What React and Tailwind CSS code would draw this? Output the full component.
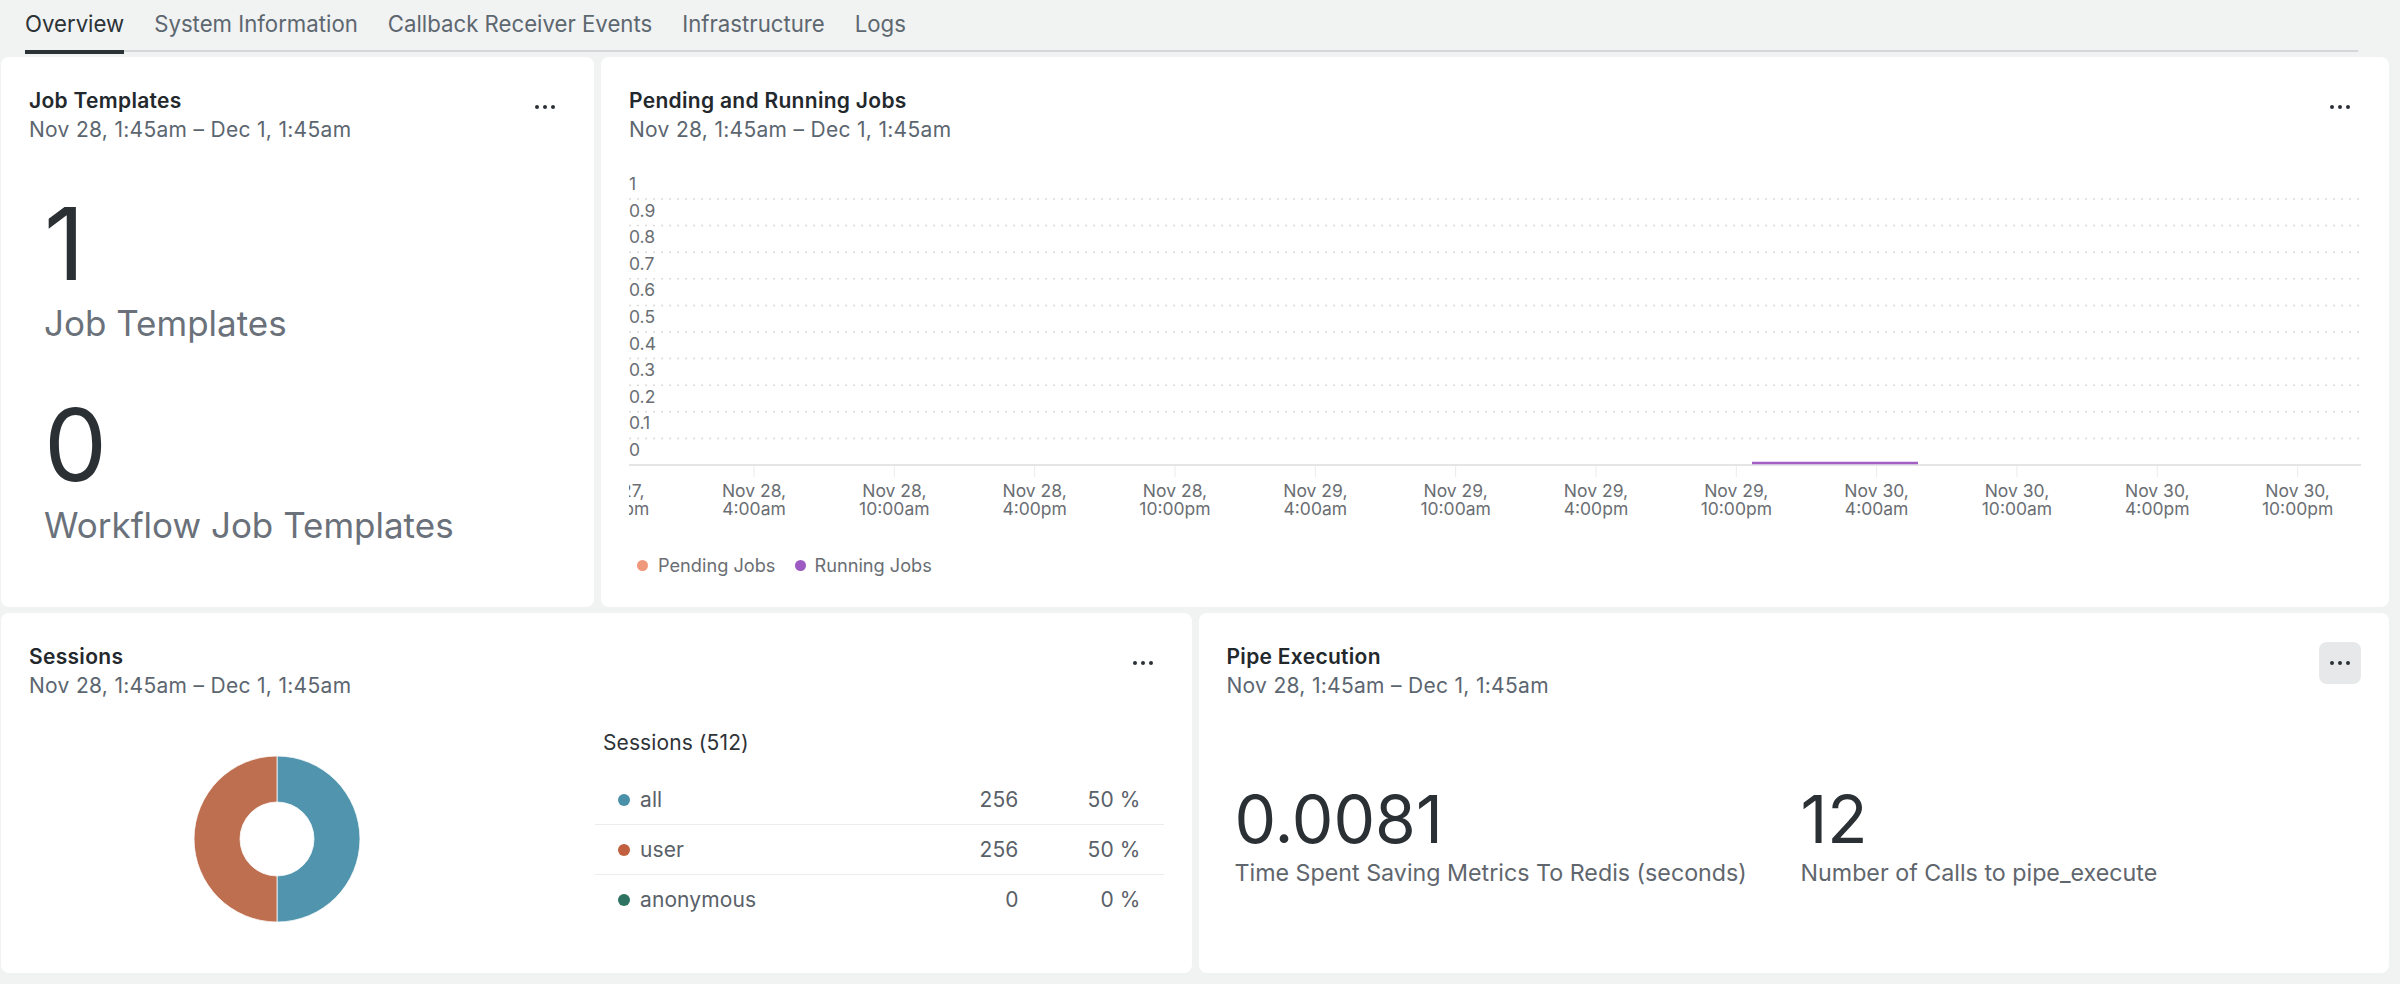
import React from 'react';

const RANGE = 'Nov 28, 1:45am – Dec 1, 1:45am';

const tabs = ['Overview', 'System Information', 'Callback Receiver Events', 'Infrastructure', 'Logs'];

const xTicks = [
  ['Nov 27,', '10:00pm'],
  ['Nov 28,', '4:00am'],
  ['Nov 28,', '10:00am'],
  ['Nov 28,', '4:00pm'],
  ['Nov 28,', '10:00pm'],
  ['Nov 29,', '4:00am'],
  ['Nov 29,', '10:00am'],
  ['Nov 29,', '4:00pm'],
  ['Nov 29,', '10:00pm'],
  ['Nov 30,', '4:00am'],
  ['Nov 30,', '10:00am'],
  ['Nov 30,', '4:00pm'],
  ['Nov 30,', '10:00pm'],
];

const yLabels = ['1', '0.9', '0.8', '0.7', '0.6', '0.5', '0.4', '0.3', '0.2', '0.1', '0'];

const sessions = [
  { name: 'all', count: 256, pct: '50 %', color: '#4a90a9' },
  { name: 'user', count: 256, pct: '50 %', color: '#c0603f' },
  { name: 'anonymous', count: 0, pct: '0 %', color: '#2f7463' },
];

const Dots = ({ hover }) => (
  <button
    className={`w-[42px] h-[42px] rounded-lg flex items-center justify-center gap-[4px] shrink-0 ${
      hover ? 'bg-[#e7e8e9]' : ''
    }`}
  >
    <span className="w-[4px] h-[4px] rounded-full bg-[#2b3136]" />
    <span className="w-[4px] h-[4px] rounded-full bg-[#2b3136]" />
    <span className="w-[4px] h-[4px] rounded-full bg-[#2b3136]" />
  </button>
);

const CardHeader = ({ title, hover }) => (
  <div className="flex items-start justify-between pl-[28px] pr-[28px] pt-[29px]">
    <div className="tracking-[0.3px]">
      <div className="text-[21px] leading-[29px] font-semibold text-[#23282d]">{title}</div>
      <div className="text-[21px] leading-[29px] text-[#5c6670]">{RANGE}</div>
    </div>
    <Dots hover={hover} />
  </div>
);

const JobsChart = () => {
  const lineY = i => 29 + 26.6 * i; // relative to svg top (y=170)
  const tickX = i => 125 + 140.33 * i;
  return (
    <svg width="1732" height="350" className="block">
      {yLabels.map((l, i) => (
        <text
          key={l}
          x="0"
          y={lineY(i) - 15.5}
          dominantBaseline="central"
          fontSize="17.5"
          fill="#6a6e73"
          fontFamily="Inter, sans-serif"
        >
          {l}
        </text>
      ))}
      {yLabels.slice(0, 10).map((l, i) => (
        <line
          key={'g' + l}
          x1="0"
          x2="1732"
          y1={lineY(i)}
          y2={lineY(i)}
          stroke="#d9dadb"
          strokeWidth="1.5"
          strokeDasharray="2 6"
        />
      ))}
      <line x1="0" x2="1732" y1="295" y2="295" stroke="#e4e5e6" strokeWidth="2" />
      {xTicks.map((t, j) => {
        const x = tickX(j - 1);
        return (
          <g key={j}>
            <line x1={x} x2={x} y1="296" y2="307" stroke="#ebebeb" strokeWidth="1" />
            <text
              x={x}
              y="320"
              textAnchor="middle"
              dominantBaseline="central"
              fontSize="17.5"
              fill="#6a6e73"
              fontFamily="Inter, sans-serif"
            >
              {t[0]}
            </text>
            <text
              x={x}
              y="338"
              textAnchor="middle"
              dominantBaseline="central"
              fontSize="17.5"
              fill="#6a6e73"
              fontFamily="Inter, sans-serif"
            >
              {t[1]}
            </text>
          </g>
        );
      })}
      <line x1="1123" x2="1289" y1="293" y2="293" stroke="#a35fc4" strokeWidth="2.5" />
    </svg>
  );
};

const Donut = () => {
  const R = 83;
  const r = 37;
  // right half (all) and left half (user)
  const right = `M 83 0 A ${R} ${R} 0 0 1 83 166 L 83 ${83 + r} A ${r} ${r} 0 0 0 83 ${83 - r} Z`;
  const left = `M 83 166 A ${R} ${R} 0 0 1 83 0 L 83 ${83 - r} A ${r} ${r} 0 0 0 83 ${83 + r} Z`;
  return (
    <svg width="166" height="166" viewBox="0 0 166 166" className="block">
      <path d={right} fill="#5194ad" stroke="#ffffff" strokeWidth="0.75" />
      <path d={left} fill="#be6f50" stroke="#ffffff" strokeWidth="0.75" />
    </svg>
  );
};

export default function App() {
  return (
    <div className="w-[2400px] h-[984px] overflow-hidden bg-[#f1f2f2] font-['Inter',sans-serif] text-[#23282d]">
      {/* tabs */}
      <div className="ml-[25px] w-[2333px] h-[52px] flex gap-[30px] border-b-2 border-[#d3d7da]">
        {tabs.map((t, i) => (
          <div
            key={t}
            className={`h-[54px] -mb-[2px] border-b-4 flex items-center text-[22.2px] leading-none ${
              i === 0 ? 'border-[#2b3337] text-[#2b3337]' : 'border-transparent text-[#5d6770]'
            }`}
          >
            <span className="-mt-[2px]">{t}</span>
          </div>
        ))}
      </div>

      <div className="pl-px pr-[11px] pt-[5px]">
        {/* row 1 */}
        <div className="flex gap-[7px] h-[550px]">
          <div className="w-[593px] shrink-0 bg-white rounded-lg">
            <CardHeader title="Job Templates" />
            <div className="pl-[43px]">
              <div className="mt-[50px] text-[100px] leading-none text-[#2b3035]">1</div>
              <div className="mt-[9px] text-[35px] leading-[40px] text-[#6a717a]">Job Templates</div>
              <div className="mt-[52px] text-[100px] leading-none text-[#2b3035]">0</div>
              <div className="mt-[10px] text-[35px] leading-[40px] text-[#6a717a]">Workflow Job Templates</div>
            </div>
          </div>

          <div className="flex-1 bg-white rounded-lg">
            <CardHeader title="Pending and Running Jobs" />
            <div className="pl-[28px] mt-[26px]">
              <JobsChart />
            </div>
            <div className="pl-[36px] mt-[33px] flex items-center text-[18.2px] leading-[24px] text-[#6a6e73]">
              <span className="w-[11px] h-[11px] rounded-full bg-[#f0987b]" />
              <span className="ml-[10px]">Pending Jobs</span>
              <span className="ml-[20px] w-[11px] h-[11px] rounded-full bg-[#9c5ac2]" />
              <span className="ml-[8px]">Running Jobs</span>
            </div>
          </div>
        </div>

        {/* row 2 */}
        <div className="flex gap-[7px] h-[360px] mt-[6px]">
          <div className="flex-1 bg-white rounded-lg">
            <CardHeader title="Sessions" />
            <div className="flex pl-[29px] pr-[28px]">
              <div className="w-[494px] flex justify-center pt-[56px]">
                <Donut />
              </div>
              <div className="ml-[71px] flex-1 pt-[29px]">
                <div className="pl-[8px] text-[21px] tracking-[0.1px] leading-[28px] text-[#2e3338]">Sessions (512)</div>
                <div className="mt-[18px]">
                  {sessions.map((s, i) => (
                    <div
                      key={s.name}
                      className={`h-[50px] flex items-center pl-[23px] pr-[23px] text-[21px] tracking-[0.1px] text-[#5a6169] ${
                        i < 2 ? 'border-b border-[#ececec]' : ''
                      }`}
                    >
                      <span className="w-[12px] h-[12px] rounded-full" style={{ backgroundColor: s.color }} />
                      <span className="ml-[10px] flex-1">{s.name}</span>
                      <span className="text-right">{s.count}</span>
                      <span className="w-[122px] text-right">{s.pct}</span>
                    </div>
                  ))}
                </div>
              </div>
            </div>
          </div>

          <div className="flex-1 bg-white rounded-lg">
            <CardHeader title="Pipe Execution" hover />
            <div className="flex pl-[36px] mt-[86px]">
              <div className="w-[566px]">
                <div className="text-[66px] leading-none text-[#2b3035]">0.0081</div>
                <div className="mt-[6px] text-[23.25px] leading-[30px] text-[#5f666d]">
                  Time Spent Saving Metrics To Redis (seconds)
                </div>
              </div>
              <div>
                <div className="text-[66px] leading-none text-[#2b3035]">12</div>
                <div className="mt-[6px] text-[23.25px] leading-[30px] text-[#5f666d]">
                  Number of Calls to pipe_execute
                </div>
              </div>
            </div>
          </div>
        </div>
      </div>
    </div>
  );
}
